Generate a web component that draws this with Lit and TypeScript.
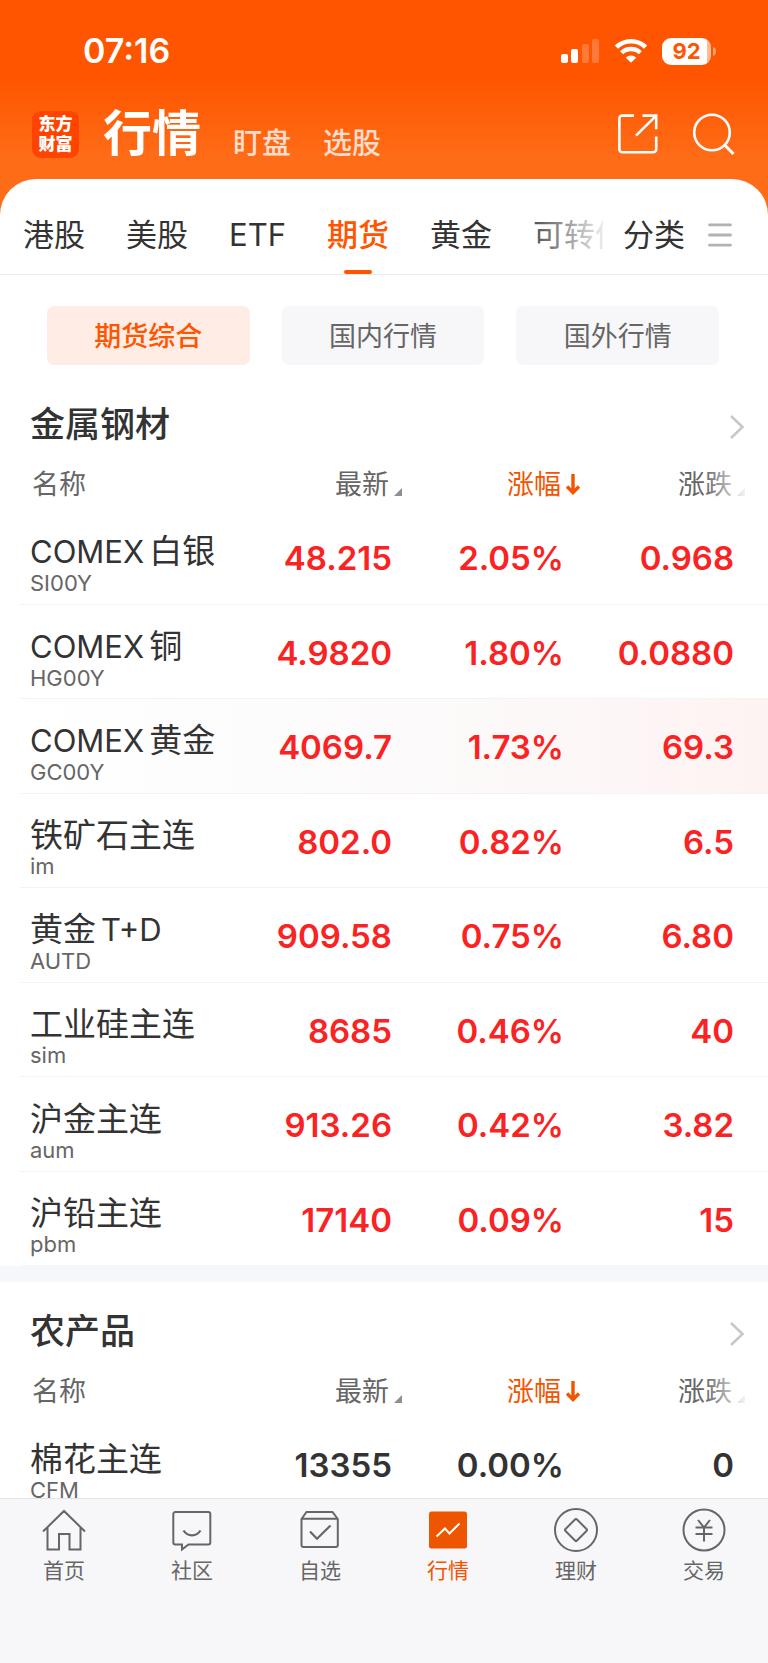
import { LitElement, html, svg, css, nothing } from "lit";
import { customElement, property, state } from "lit/decorators.js";
import { classMap } from "lit/directives/class-map.js";

interface Quote {
  name: string;
  code: string;
  last: string;
  pct: string;
  change: string;
  flat?: boolean;
  flash?: boolean;
}

const METALS: Quote[] = [
  { name: "COMEX 白银", code: "SI00Y", last: "48.215", pct: "2.05%", change: "0.968" },
  { name: "COMEX 铜", code: "HG00Y", last: "4.9820", pct: "1.80%", change: "0.0880" },
  { name: "COMEX 黄金", code: "GC00Y", last: "4069.7", pct: "1.73%", change: "69.3", flash: true },
  { name: "铁矿石主连", code: "im", last: "802.0", pct: "0.82%", change: "6.5" },
  { name: "黄金 T+D", code: "AUTD", last: "909.58", pct: "0.75%", change: "6.80" },
  { name: "工业硅主连", code: "sim", last: "8685", pct: "0.46%", change: "40" },
  { name: "沪金主连", code: "aum", last: "913.26", pct: "0.42%", change: "3.82" },
  { name: "沪铅主连", code: "pbm", last: "17140", pct: "0.09%", change: "15" },
];

const FARM: Quote[] = [
  { name: "棉花主连", code: "CFM", last: "13355", pct: "0.00%", change: "0", flat: true },
];

const resets = css`
  :host,
  * {
    box-sizing: border-box;
  }
  button {
    margin: 0;
    padding: 0;
    border: 0;
    background: none;
    font: inherit;
    color: inherit;
    cursor: pointer;
  }
  a {
    color: inherit;
    text-decoration: none;
  }
  svg {
    display: block;
    flex: none;
  }
`;

@customElement("status-bar")
export class StatusBar extends LitElement {
  static styles = [
    resets,
    css`
      :host {
        display: flex;
        justify-content: space-between;
        align-items: center;
        height: 102px;
        padding: 0 51px 0 83px;
        color: #fff;
      }
      .time {
        font-size: 34px;
        font-weight: 600;
        line-height: 40px;
      }
      .signals {
        display: flex;
        align-items: center;
        gap: 14px;
      }
      .battery {
        display: flex;
        align-items: center;
        gap: 2px;
      }
      .charge {
        width: 49px;
        height: 27px;
        border-radius: 9px;
        background: linear-gradient(90deg, #fff 92%, #ffbb99 92%);
        color: #ff5500;
        font-size: 22px;
        font-weight: 700;
        line-height: 27px;
        text-align: center;
      }
    `,
  ];

  render() {
    return html`
      <span class="time">07:16</span>
      <div class="signals">
        <svg width="40" height="26" viewBox="0 0 40 26" fill="#fff" aria-hidden="true">
          <rect x="1" y="16" width="7" height="9" rx="2" />
          <rect x="11" y="11" width="7" height="14" rx="2" />
          <rect x="22" y="6" width="7" height="19" rx="2" opacity=".22" />
          <rect x="32" y="1" width="7" height="24" rx="2" opacity=".22" />
        </svg>
        <svg width="34" height="26" viewBox="0 0 34 26" fill="none" stroke="#fff" aria-hidden="true">
          <path d="M2.4 9.2a21 21 0 0 1 29.2 0" stroke-width="4.6" />
          <path d="M7.6 14.8a13.4 13.4 0 0 1 18.8 0" stroke-width="4.4" />
          <path d="M17 24.8 11.8 19.7a7.4 7.4 0 0 1 10.4 0z" fill="#fff" stroke="none" />
        </svg>
        <div class="battery">
          <div class="charge">92</div>
          <svg width="4" height="9" viewBox="0 0 4 9" aria-hidden="true">
            <path d="M0 0c2 .6 3 2.2 3 4.5S2 8.4 0 9z" fill="#ffa070" />
          </svg>
        </div>
      </div>
    `;
  }
}

@customElement("title-bar")
export class TitleBar extends LitElement {
  static styles = [
    resets,
    css`
      :host {
        display: flex;
        align-items: center;
        height: 77px;
        padding: 0 33px 13px 32px;
        color: #fff;
      }
      .logo {
        display: grid;
        place-content: center;
        width: 47px;
        height: 47px;
        border-radius: 9px;
        background: #ff4400;
        font-size: 17px;
        font-weight: 900;
        line-height: 20px;
      }
      .titles {
        display: flex;
        align-items: flex-end;
        flex: 1;
        gap: 32px;
        padding-left: 24px;
      }
      h1 {
        margin: 0;
        font-size: 49px;
        font-weight: 700;
        line-height: 64px;
      }
      .other {
        color: #ffddcc;
        font-size: 29px;
        font-weight: 500;
        line-height: 44px;
      }
      .tools {
        display: flex;
        gap: 34px;
      }
    `,
  ];

  render() {
    return html`
      <div class="logo"><span>东方</span><span>财富</span></div>
      <div class="titles">
        <h1>行情</h1>
        <a class="other" href="#watch">盯盘</a>
        <a class="other" href="#pick">选股</a>
      </div>
      <div class="tools">
        <button aria-label="分享">
          <svg width="42" height="42" viewBox="0 0 42 42" fill="none" stroke="#fff" stroke-width="2.6">
            <path d="M17 2.6H5a2.6 2.6 0 0 0-2.6 2.6V36.6A2.6 2.6 0 0 0 5 39.2H36.6A2.6 2.6 0 0 0 39.2 36.6V23.6" />
            <path d="M25.5 2.6H39.2V16.2M38.5 3.3 19 22.7" />
          </svg>
        </button>
        <button aria-label="搜索">
          <svg width="42" height="42" viewBox="0 0 42 42" fill="none" stroke="#fff" stroke-width="2.6">
            <circle cx="19" cy="19.5" r="17.8" />
            <path d="M31.2 31.5 40.5 41" stroke-width="3" />
          </svg>
        </button>
      </div>
    `;
  }
}

@customElement("market-tabs")
export class MarketTabs extends LitElement {
  static styles = [
    resets,
    css`
      :host {
        display: flex;
        align-items: stretch;
        height: 96px;
        border-bottom: 1px solid #ececee;
        border-radius: 36px 36px 0 0;
        background: #fff;
        color: #333;
        font-size: 31px;
        line-height: 40px;
      }
      .strip {
        position: relative;
        display: flex;
        flex: 1;
        gap: 41px;
        min-width: 0;
        padding-left: 23px;
        overflow: hidden;
      }
      .strip::after {
        content: "";
        position: absolute;
        inset: 0 0 0 auto;
        width: 84px;
        background: linear-gradient(90deg, rgba(255, 255, 255, 0), rgba(255, 255, 255, 0.9));
        pointer-events: none;
      }
      .tab {
        position: relative;
        flex: none;
        padding-top: 17px;
        white-space: nowrap;
      }
      .tab.on {
        color: #ff5500;
        font-weight: 500;
      }
      .tab.on::after {
        content: "";
        position: absolute;
        bottom: 0;
        left: calc(50% - 14px);
        width: 28px;
        height: 4px;
        border-radius: 2px;
        background: #ff5500;
      }
      .all {
        display: flex;
        align-items: center;
        gap: 23px;
        padding: 17px 36px 0 20px;
      }
    `,
  ];

  @state() private current = "期货";

  render() {
    return html`
      <div class="strip">
        ${["港股", "美股", "ETF", "期货", "黄金", "可转债"].map(
          (t) => html`<button
            class=${classMap({ tab: true, on: t === this.current })}
            @click=${() => (this.current = t)}
          >${t}</button>`
        )}
      </div>
      <button class="all">
        分类
        <svg width="24" height="24" viewBox="0 0 24 24" stroke="#b2b2b2" stroke-width="2.8" stroke-linecap="round">
          <path d="M1.5 1.8h21M1.5 12h21M1.5 22.2h21" />
        </svg>
      </button>
    `;
  }
}

@customElement("scope-chips")
export class ScopeChips extends LitElement {
  static styles = [
    resets,
    css`
      :host {
        display: grid;
        grid-template-columns: repeat(3, 1fr);
        gap: 32px;
        padding: 31px 49px 10px 47px;
      }
      .chip {
        height: 59px;
        padding-top: 2px;
        border-radius: 7px;
        background: #f7f7fa;
        color: #666;
        font-size: 27px;
        line-height: 57px;
      }
      .chip.on {
        background: #ffece4;
        color: #ff5500;
        font-weight: 500;
      }
    `,
  ];

  @state() private current = "期货综合";

  render() {
    return ["期货综合", "国内行情", "国外行情"].map(
      (t) => html`<button
        class=${classMap({ chip: true, on: t === this.current })}
        @click=${() => (this.current = t)}
      >${t}</button>`
    );
  }
}

@customElement("quote-section")
export class QuoteSection extends LitElement {
  static styles = [
    resets,
    css`
      :host {
        display: block;
        background: #fff;
      }
      .head {
        display: flex;
        align-items: center;
        justify-content: space-between;
        height: 83px;
        padding: 14px 23px 0 30px;
      }
      h2 {
        margin: 0;
        color: #333;
        font-size: 35px;
        font-weight: 500;
        line-height: 44px;
      }
      .more {
        padding-top: 6px;
      }
      .wrap {
        padding-left: 20px;
      }
      table {
        width: 100%;
        border-collapse: separate;
        border-spacing: 0;
        table-layout: fixed;
      }
      .num {
        width: 172px;
      }
      .end {
        width: 204px;
      }
      th {
        height: 52px;
        padding: 2px 3px 0 0;
        color: #666;
        font-size: 27px;
        font-weight: 400;
        line-height: 50px;
        text-align: right;
      }
      th:first-child {
        padding-left: 12px;
        text-align: left;
      }
      th:last-child {
        position: relative;
        padding-right: 36px;
      }
      th:last-child::after {
        content: "";
        position: absolute;
        inset: 0 22px 0 auto;
        width: 42px;
        background: linear-gradient(90deg, rgba(255, 255, 255, 0), rgba(255, 255, 255, 0.9));
        pointer-events: none;
      }
      .sort {
        display: inline-flex;
        align-items: center;
      }
      .sort.on {
        color: #f35400;
      }
      .mark {
        width: 0;
        overflow: visible;
      }
      .mark svg {
        margin-left: 5px;
      }
      td {
        height: 94px;
        padding: 2px 0 0;
        border-bottom: 1px solid #f3f3f5;
        color: #fa2323;
        font-size: 33px;
        font-weight: 600;
        line-height: 40px;
        text-align: right;
      }
      tr:nth-child(odd) td {
        height: 95px;
      }
      tr:last-child td {
        border-bottom-color: #f6f7fa;
      }
      td:first-child {
        padding: 11px 0 0 10px;
        text-align: left;
        white-space: nowrap;
      }
      td:last-child {
        padding-right: 34px;
      }
      .name {
        display: flex;
        align-items: baseline;
        gap: 5px;
        color: #333;
        font-size: 33px;
        font-weight: 400;
        line-height: 40px;
      }
      .latin {
        font-size: 31px;
      }
      .code {
        color: #666;
        font-size: 22px;
        font-weight: 400;
        line-height: 22px;
      }
      .flat td {
        color: #333;
      }
      .flash {
        background: linear-gradient(90deg, #fff, #fcfafa 55%, #fef3f3);
      }
    `,
  ];

  @property() heading = "";
  @property({ attribute: false }) quotes: Quote[] = [];

  private column(label: string, active = false) {
    const corner = svg`<path d="M8 14v8H0z" fill="#8e8e93" />`;
    const arrow = svg`<path d="M7 0v18M1 12.5l6 6 6-6" fill="none" stroke="#f35400" stroke-width="3.4" />`;
    return html`<th scope="col" aria-sort=${active ? "descending" : nothing}>
      <button class=${classMap({ sort: true, on: active })}>
        ${label}
        <span class="mark">
          <svg width="14" height="22" viewBox="0 0 14 22" overflow="visible">
            ${active ? arrow : corner}
          </svg>
        </span>
      </button>
    </th>`;
  }

  render() {
    return html`
      <div class="head">
        <h2>${this.heading}</h2>
        <a class="more" href="#more" aria-label="更多">
          <svg width="16" height="26" viewBox="0 0 16 26" fill="none" stroke="#c8c8c8" stroke-width="2.6">
            <path d="M2 2 13.5 13 2 24" />
          </svg>
        </a>
      </div>
      <div class="wrap">
        <table>
          <colgroup>
            <col />
            <col class="num" />
            <col class="num" />
            <col class="end" />
          </colgroup>
          <thead>
            <tr>
              <th scope="col">名称</th>
              ${this.column("最新")} ${this.column("涨幅", true)} ${this.column("涨跌")}
            </tr>
          </thead>
          <tbody>
            ${this.quotes.map(
              (q) => html`<tr class=${classMap({ flat: !!q.flat, flash: !!q.flash })}>
                <td>
                  <div class="name">
                    ${q.name
                      .split(" ")
                      .map((p) => html`<span class=${classMap({ latin: /^[A-Z]/.test(p) })}>${p}</span>`)}
                  </div>
                  <div class="code">${q.code}</div>
                </td>
                <td>${q.last}</td>
                <td>${q.pct}</td>
                <td>${q.change}</td>
              </tr>`
            )}
          </tbody>
        </table>
      </div>
    `;
  }
}

@customElement("bottom-nav")
export class BottomNav extends LitElement {
  static styles = [
    resets,
    css`
      :host {
        display: block;
        border-top: 1px solid #e2e2e8;
        background: #f7f7fa;
      }
      nav {
        display: grid;
        grid-template-columns: repeat(6, 1fr);
        height: 164px;
        padding-top: 9px;
      }
      .item {
        display: flex;
        flex-direction: column;
        align-items: center;
        gap: 5px;
        color: #666;
        font-size: 21px;
        line-height: 28px;
      }
      .item.on {
        color: #f35400;
      }
    `,
  ];

  private items = [
    {
      label: "首页",
      icon: svg`<path d="M1 23.5 22 3 43 23.5M5.5 19.5V41.5H17V26H27.5V41.5H38.5V19.5" />`,
    },
    {
      label: "社区",
      icon: svg`<path d="M5.3 4h33a2 2 0 0 1 2 2V34.5a2 2 0 0 1-2 2H18.5L12 41.5V36.5H5.3a2 2 0 0 1-2-2V6a2 2 0 0 1 2-2z" />
        <path d="M13.5 22.5c4 6.4 13 6.4 17 0" stroke-width="2.2" />`,
    },
    {
      label: "自选",
      icon: svg`<path d="M3.5 11 8.5 4H34.5L39.8 11V37a2 2 0 0 1-2 2H5.5a2 2 0 0 1-2-2zM3.5 10.8H39.8" />
        <path d="M12 23.5 19 30.8 32.5 17.5" stroke-width="2.2" />`,
    },
    {
      label: "行情",
      active: true,
      icon: svg`<rect x="3" y="3.5" width="38" height="37" rx="2.5" fill="#ee5500" stroke="none" />
        <path d="M10.5 28.5 19 20.5 23.5 25.5 33.5 15.5" stroke="#fff" stroke-width="2" />`,
    },
    {
      label: "理财",
      icon: svg`<circle cx="22" cy="22" r="21" />
        <path d="M21 11.5Q22 10.5 23 11.5L32.5 21Q33.5 22 32.5 23L23 32.5Q22 33.5 21 32.5L11.5 23Q10.5 22 11.5 21z" />`,
    },
    {
      label: "交易",
      icon: svg`<circle cx="22" cy="22" r="20.5" />
        <path d="M16 12 22 19.5 28 12M22 19.5V33.5M13.5 19.5H30.5M13.5 26H30.5" />`,
    },
  ];

  render() {
    return html`<nav>
      ${this.items.map(
        (i) => html`<a class=${classMap({ item: true, on: !!i.active })} href="#${i.label}">
          <svg width="44" height="44" viewBox="0 0 44 44" fill="none" stroke="#666" stroke-width="2">${i.icon}</svg>
          <span>${i.label}</span>
        </a>`
      )}
    </nav>`;
  }
}

@customElement("app-root")
export class AppRoot extends LitElement {
  static styles = css`
    :host {
      display: flex;
      flex-direction: column;
      height: 100vh;
      overflow: hidden;
      background: #fff;
      font-family: Inter, "Noto Sans CJK SC", sans-serif;
    }
    header {
      flex: none;
      background: linear-gradient(180deg, #ff5500 78px, #ff6c17 158px);
    }
    main {
      flex: 1;
      min-height: 0;
      overflow: hidden;
    }
    .gap {
      height: 16px;
      background: #f6f7fa;
    }
    bottom-nav {
      flex: none;
    }
  `;

  render() {
    return html`
      <header>
        <status-bar></status-bar>
        <title-bar></title-bar>
        <market-tabs></market-tabs>
      </header>
      <main>
        <scope-chips></scope-chips>
        <quote-section heading="金属钢材" .quotes=${METALS}></quote-section>
        <div class="gap"></div>
        <quote-section heading="农产品" .quotes=${FARM}></quote-section>
      </main>
      <bottom-nav></bottom-nav>
    `;
  }
}
